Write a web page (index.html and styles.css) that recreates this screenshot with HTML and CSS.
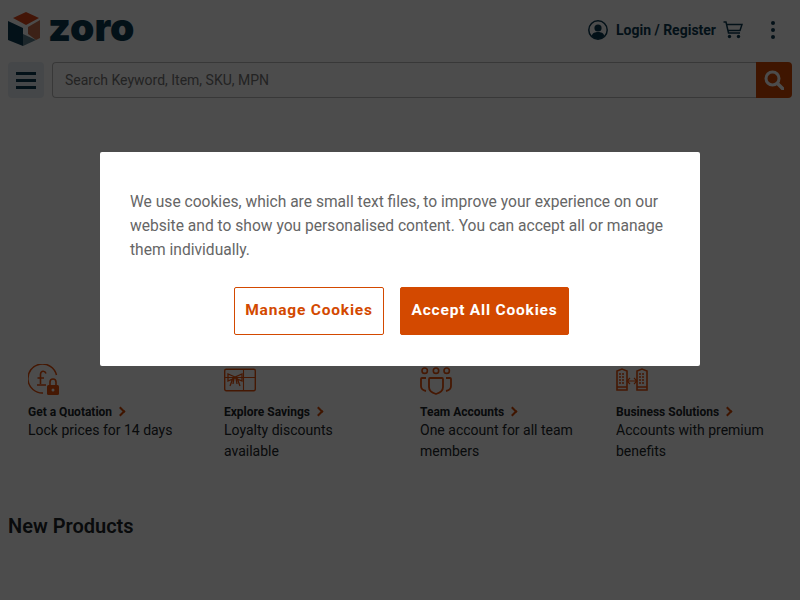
FILE: index.html
```html
<!DOCTYPE html>
<html>
	<head>
		<title>Zoro</title>
		<link rel="stylesheet" href="styles.css">
	</head>
	<body>
		<header class="top">
			<div class="logo">
				<svg class="cube" width="33" height="36" viewBox="0 0 33 36">
					<path d="M18 0 31 6 18 13 5 6Z" fill="#e0481a"/>
					<path d="M20 15 32 8V26L28 28 20 22Z" fill="#c8714e"/>
					<path d="M0 9 15 16V34L0 28Z" fill="#0d3a52"/>
					<path d="M15 22 28 28 15 34Z" fill="#5f808e"/>
				</svg>
				<span class="logo-text">zoro</span>
			</div>
			<div class="actions">
				<svg class="user" width="20" height="20" viewBox="0 0 20 20">
					<circle cx="10" cy="10" r="9.200" fill="none" stroke="#0d3a52" stroke-width="1.500"/>
					<circle cx="10" cy="8" r="3.600" fill="#0d3a52"/>
					<path d="M3.600 16C4.500 12.800 7 12 10 12S15.500 12.800 16.400 16C14.800 18 12.500 19 10 19S5.200 18 3.600 16Z" fill="#0d3a52"/>
				</svg>
				<span class="login">Login / Register</span>
				<svg class="cart" width="20" height="18" viewBox="0 0 20 18">
					<path d="M0.500 1H3L5.500 12H17M4 3.500H19L17 9.500H5.200" fill="none" stroke="#0d3a52" stroke-width="1.500"/>
					<circle cx="6.500" cy="15.500" r="1.700" fill="#0d3a52"/>
					<circle cx="15.500" cy="15.500" r="1.700" fill="#0d3a52"/>
				</svg>
				<div class="dots"><i></i><i></i><i></i></div>
			</div>
		</header>

		<div class="search-row">
			<button class="menu-btn"><i></i><i></i><i></i></button>
			<div class="search">
				<div class="search-input">Search Keyword, Item, SKU, MPN</div>
				<button class="search-btn">
					<svg width="20" height="20" viewBox="0 0 20 20">
						<circle cx="8.500" cy="8.500" r="6.500" fill="none" stroke="#fff" stroke-width="3"/>
						<path d="M13.500 13.500 19 19" stroke="#fff" stroke-width="3.400" stroke-linecap="round"/>
					</svg>
				</button>
			</div>
		</div>

		<section class="features">
			<div class="feature">
				<svg class="feature-icon" width="32" height="32" viewBox="0 0 32 32">
					<path d="M28.500 11A14.500 14.500 0 1 0 15 29" fill="none" stroke="#e8500a" stroke-width="1.500"/>
					<path d="M18 9.500C17 6.500 13 6.500 12.500 10V20M9.500 14H16M9 21H18" fill="none" stroke="#e8500a" stroke-width="1.600"/>
					<rect x="19" y="21" width="12" height="10" rx="1.500" fill="#e8500a"/>
					<path d="M22 21V18A3 3 0 0 1 28 18V21" fill="none" stroke="#e8500a" stroke-width="1.600"/>
					<circle cx="25" cy="26" r="1.500" fill="#fff"/>
				</svg>
				<h3 class="feature-title">Get a Quotation <span class="chevron"></span></h3>
				<p class="feature-text">Lock prices for 14 days</p>
			</div>
			<div class="feature">
				<svg class="feature-icon" width="32" height="32" viewBox="0 0 32 32">
					<rect x="0.700" y="5.200" width="30.600" height="21.600" rx="1.500" fill="none" stroke="#e8500a" stroke-width="1.400"/>
					<path d="M1 13.500H31M19.500 5V27" fill="none" stroke="#e8500a" stroke-width="1.100"/>
					<path d="M11 13 4 10V17L11 14 18 17V10ZM9 14 6 22M13 14 16 22M10 14 9 20M12 14 13 20" fill="none" stroke="#e8500a" stroke-width="1.300"/>
				</svg>
				<h3 class="feature-title">Explore Savings <span class="chevron"></span></h3>
				<p class="feature-text">Loyalty discounts available</p>
			</div>
			<div class="feature">
				<svg class="feature-icon" width="32" height="32" viewBox="0 0 32 32">
					<circle cx="4.700" cy="6.700" r="2.700" fill="none" stroke="#e8500a" stroke-width="1.600"/>
					<circle cx="16" cy="6.700" r="2.700" fill="none" stroke="#e8500a" stroke-width="1.600"/>
					<circle cx="26.700" cy="6.700" r="2.700" fill="none" stroke="#e8500a" stroke-width="1.600"/>
					<path d="M6 14H2Q1 14 1 15V22Q1 26 6 27M26 14H30Q31 14 31 15V22Q31 26 26 27" fill="none" stroke="#e8500a" stroke-width="1.800"/>
					<path d="M10 14H22Q23 14 23 15.500V23Q23 28 16 30Q9 28 9 23V15.500Q9 14 10 14Z" fill="none" stroke="#e8500a" stroke-width="1.800"/>
				</svg>
				<h3 class="feature-title">Team Accounts <span class="chevron"></span></h3>
				<p class="feature-text">One account for all team members</p>
			</div>
			<div class="feature">
				<svg class="feature-icon" width="32" height="32" viewBox="0 0 32 32">
					<path d="M1 26V7L6 5 11 7V26ZM21 26V7L26 5 31 7V26Z" fill="none" stroke="#e8500a" stroke-width="1.600"/>
					<path d="M3 10H9M3 13H9M3 16H9M3 19H9M23 10H29M23 13H29M23 16H29M23 19H29" stroke="#e8500a" stroke-width="1.600" stroke-dasharray="2 1"/>
					<path d="M1 23H11M21 23H31" stroke="#e8500a" stroke-width="1.600"/>
					<path d="M11 17H21M14 14 11 17 14 20M18 14 21 17 18 20" fill="none" stroke="#e8500a" stroke-width="1.100"/>
				</svg>
				<h3 class="feature-title">Business Solutions <span class="chevron"></span></h3>
				<p class="feature-text">Accounts with premium benefits</p>
			</div>
		</section>

		<h2 class="section-title">New Products</h2>

		<div class="overlay">
			<div class="modal">
				<p class="modal-text">We use cookies, which are small text files, to improve your experience on our website and to show you personalised content. You can accept all or manage them individually.</p>
				<div class="modal-btns">
					<button class="btn btn-outline">Manage Cookies</button>
					<button class="btn btn-solid">Accept All Cookies</button>
				</div>
			</div>
		</div>
	</body>
</html>
```

FILE: styles.css
```css
* {
	box-sizing: border-box;
	font-family: Roboto, sans-serif;
}

html,
body {
	height: 600px;
	overflow: hidden;
}

body {
	margin: 0;
	background-color: #fff;
	color: #212529;
}

.top {
	display: flex;
	justify-content: space-between;
	align-items: center;
	height: 62px;
	padding: 0 25px 2px 8px;
}

.logo {
	display: flex;
	align-items: center;
	gap: 7px;
}

.logo-text {
	font-family: Inter, sans-serif;
	font-weight: 900;
	font-size: 39px;
	line-height: 36px;
	color: #0d3a52;
	margin-top: -6px;
}

.actions {
	display: flex;
	align-items: center;
}

.login {
	margin-left: 8px;
	font-size: 14px;
	font-weight: 700;
	color: #0d3a52;
}

.cart {
	margin-left: 7px;
}

.dots {
	display: flex;
	flex-direction: column;
	gap: 3px;
	margin-left: 28px;
}
.dots i {
	display: block;
	width: 4px;
	height: 4px;
	border-radius: 50%;
	background-color: #0d3a52;
}

.search-row {
	display: flex;
	gap: 8px;
	padding: 0 8px;
}

.menu-btn {
	display: flex;
	flex-direction: column;
	justify-content: center;
	align-items: center;
	gap: 4px;
	width: 36px;
	height: 36px;
	padding: 0;
	border: 0;
	border-radius: 4px;
	background-color: #e8eef3;
}
.menu-btn i {
	display: block;
	width: 20px;
	height: 3px;
	background-color: #0d3a52;
}

.search {
	display: flex;
	flex: 1;
}

.search-input {
	flex: 1;
	height: 36px;
	padding: 0 12px;
	border: 1px solid #bdbdbd;
	border-right: 0;
	border-radius: 4px 0 0 4px;
	font-size: 14px;
	line-height: 34px;
	color: #757575;
}

.search-btn {
	display: flex;
	justify-content: center;
	align-items: center;
	width: 36px;
	height: 36px;
	padding: 0;
	border: 0;
	border-radius: 0 4px 4px 0;
	background-color: #d34900;
}

.features {
	display: grid;
	grid-template-columns: repeat(4, 196px);
	padding: 266px 8px 0;
}

.feature {
	padding: 0 20px;
}

.feature-icon {
	display: block;
}

.feature-title {
	margin: 8px 0 0;
	font-size: 12px;
	font-weight: 700;
	line-height: 16px;
	color: #212529;
}

.chevron {
	display: inline-block;
	width: 7px;
	height: 7px;
	margin-left: 2px;
	border-top: 2px solid #d34900;
	border-right: 2px solid #d34900;
	transform: rotate(45deg);
	position: relative;
	top: -1px;
}

.feature-text {
	margin: 0;
	font-size: 14px;
	line-height: 21px;
	color: #212529;
}

.section-title {
	margin: 49px 0 0;
	padding: 0 8px;
	font-size: 20px;
	font-weight: 600;
	line-height: 30px;
	color: #212529;
}

.overlay {
	position: fixed;
	top: 0;
	left: 0;
	width: 800px;
	height: 600px;
	background-color: rgba(0, 0, 0, 0.7);
}

.modal {
	width: 600px;
	height: 214px;
	margin: 152px auto 0;
	padding: 38px 30px 0;
	border-radius: 2px;
	background-color: #fff;
}

.modal-text {
	margin: 0;
	font-size: 15.600px;
	line-height: 24px;
	color: #666;
}

.modal-btns {
	display: flex;
	justify-content: center;
	gap: 16px;
	margin-top: 25px;
	padding-left: 3px;
}

.btn {
	height: 48px;
	padding: 0 0 3px;
	border: 1px solid #d34900;
	border-radius: 2px;
	font-size: 15.500px;
	font-weight: 700;
	letter-spacing: 0.8px;
	white-space: nowrap;
}

.btn-outline {
	width: 150px;
	background-color: #fff;
	color: #d34900;
}

.btn-solid {
	width: 169px;
	background-color: #d34900;
	color: #fff;
}
```
